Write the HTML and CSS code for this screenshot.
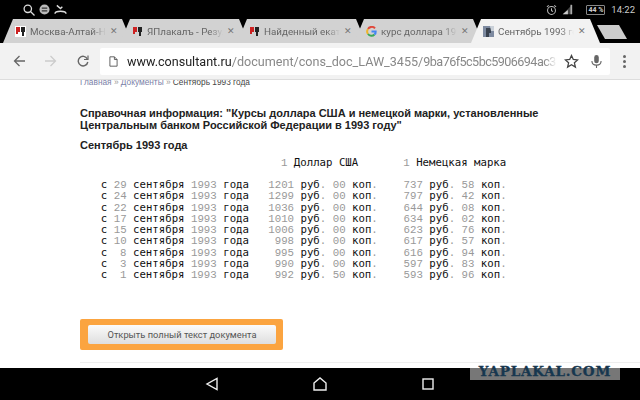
FILE: index.html
```html
<!DOCTYPE html>
<html lang="ru">

<head>
    <meta charset="utf-8">
    <title>Сентябрь 1993 года</title>
    <link rel="stylesheet" href="styles.css">
</head>

<body>
    <div class="statusbar">
        <div class="status_left">
            <svg width="12" height="12" viewBox="0 0 12 12" fill="none" stroke="#ddd" stroke-width="1.3"><circle cx="4.800" cy="4.800" r="3.700"/><path d="M7.500 7.500 11.500 11.500"/></svg>
            <svg width="11" height="11" viewBox="0 0 12 12"><circle cx="6" cy="6" r="5.500" fill="#bbb"/><path d="M3 4.500h6M3 7.500h6" stroke="#333" stroke-width="1.200"/></svg>
            <svg width="13" height="11" viewBox="0 0 14 12" fill="none" stroke="#ddd" stroke-width="1.500"><path d="M1 10.500C1 7 13 7 13 10.500"/><path d="M3 1.500 7 5l2-2"/></svg>
        </div>
        <div class="status_right">
            <svg width="11" height="12" viewBox="0 0 12 12" fill="none" stroke="#bbb" stroke-width="1.100"><circle cx="6" cy="6.500" r="4.300"/><path d="M6 4v2.700l1.700 1M1 2.500 3 1M11 2.500 9 1"/></svg>
            <svg class="signal" width="12" height="13" viewBox="0 0 14 13"><path d="M13 1v11H2z" fill="#444"/><path d="M8 7v5H2z" fill="#ccc"/><path d="M11 1h2v11h-2z" fill="#aaa"/></svg>
            <span class="battery">44 %</span>
            <span class="clock">14:22</span>
        </div>
    </div>

    <div class="tabstrip">
        <div class="tab">
            <svg class="favicon" width="11" height="11" viewBox="0 0 11 11"><rect width="11" height="11" fill="#fff"/><path d="M1 1h4v5H3v2H1z" fill="#c22"/><path d="M6 1h4v5H9v4H7V6H6z" fill="#222"/></svg>
            <span class="tab_title">Москва-Алтай-Новосибирск</span>
            <span class="tab_close">✕</span>
        </div>
        <div class="tab">
            <svg class="favicon" width="11" height="11" viewBox="0 0 11 11"><path d="M1 1h4v5H3v2H1z" fill="#c22"/><path d="M6 1h4v5H9v4H7V6H6z" fill="#222"/></svg>
            <span class="tab_title">ЯПлакалъ - Результаты</span>
            <span class="tab_close">✕</span>
        </div>
        <div class="tab">
            <svg class="favicon" width="11" height="11" viewBox="0 0 11 11"><path d="M1 1h4v5H3v2H1z" fill="#c22"/><path d="M6 1h4v5H9v4H7V6H6z" fill="#222"/></svg>
            <span class="tab_title">Найденный екатеринбург</span>
            <span class="tab_close">✕</span>
        </div>
        <div class="tab">
            <svg class="favicon" width="11" height="11" viewBox="0 0 11 11" fill="none" stroke-width="2"><path d="M9 2.400A4.300 4.300 0 0 0 2 3" stroke="#e0483a"/><path d="M2 3a4.300 4.300 0 0 0 0 5" stroke="#f0b429"/><path d="M2 8a4.300 4.300 0 0 0 6.500.5" stroke="#3aa757"/><path d="M8.500 8.500c1-1 1.300-1.900 1.200-3H5.500" stroke="#4285f4"/></svg>
            <span class="tab_title">курс доллара 1993 года</span>
            <span class="tab_close">✕</span>
        </div>
        <div class="tab tab_active">
            <svg class="favicon" width="11" height="11" viewBox="0 0 11 11"><rect width="11" height="11" fill="#7d8aa0"/><path d="M3 2h5v5H6v4H3z" fill="#39424f"/><path d="M7 0h4v5H8z" fill="#c9d0d8"/></svg>
            <span class="tab_title">Сентябрь 1993 года</span>
            <span class="tab_close">✕</span>
        </div>
        <div class="newtab"></div>
    </div>

    <div class="toolbar">
        <svg class="tool_btn" width="12" height="12" viewBox="0 0 12 12" fill="none" stroke="#666" stroke-width="1.300"><path d="M12 6H1.500M6.500 1 1.500 6l5 5"/></svg>
        <svg class="tool_btn" width="12" height="12" viewBox="0 0 12 12" fill="none" stroke="#ccc" stroke-width="1.300"><path d="M0 6h10.500M5.500 1l5 5-5 5"/></svg>
        <svg class="tool_btn" width="12" height="12" viewBox="0 0 12 12" fill="none" stroke="#666" stroke-width="1.400"><path d="M10.300 3.800A4.800 4.800 0 1 0 10.800 7"/><path d="M11 .5v4H7" stroke-width="1.200"/></svg>
        <div class="omnibox">
            <svg width="9" height="11" viewBox="0 0 10 12" fill="none" stroke="#555"><path d="M1 .8h5l3 3v7.400H1zM6 .8v3h3"/></svg>
            <span class="url"><b>www.consultant.ru</b>/document/cons_doc_LAW_3455/<span class="url_hash">9ba76f5c5bc5906694ac313c</span></span>
            <svg class="star" width="15" height="15" viewBox="0 0 15 15" fill="none" stroke="#444" stroke-width="1.300"><path d="m7.500 1.500 1.800 4 4.300.4-3.200 2.900 1 4.300-3.900-2.300-3.900 2.300 1-4.300L1.400 5.900l4.300-.4z"/></svg>
            <svg class="mic" width="11" height="15" viewBox="0 0 12 16"><rect x="3.500" y="1" width="5" height="9" rx="2.500" fill="#666"/><path d="M1 7.500c0 6 10 6 10 0M6 12v3" fill="none" stroke="#666" stroke-width="1.200"/></svg>
        </div>
        <div class="dots"><i></i><i></i><i></i></div>
    </div>

    <main class="page">
        <div class="crumbs"><a>Главная</a> <span>»</span> <a>Документы</a> <span>»</span> Сентябрь 1993 года</div>

        <h1>Справочная информация: "Курсы доллара США и немецкой марки, установленные<br>Центральным банком Российской Федерации в 1993 году"</h1>
        <h2>Сентябрь 1993 года</h2>

<pre class="rates">                               <i>1</i> Доллар США       <i>1</i> Немецкая марка

   с <i>29</i> сентября <i>1993</i> года   <i>1201</i> руб<i>.</i> <i>00</i> коп<i>.</i>    <i>737</i> руб<i>.</i> <i>58</i> коп<i>.</i>
   с <i>24</i> сентября <i>1993</i> года   <i>1299</i> руб<i>.</i> <i>00</i> коп<i>.</i>    <i>797</i> руб<i>.</i> <i>42</i> коп<i>.</i>
   с <i>22</i> сентября <i>1993</i> года   <i>1036</i> руб<i>.</i> <i>00</i> коп<i>.</i>    <i>644</i> руб<i>.</i> <i>08</i> коп<i>.</i>
   с <i>17</i> сентября <i>1993</i> года   <i>1010</i> руб<i>.</i> <i>00</i> коп<i>.</i>    <i>634</i> руб<i>.</i> <i>02</i> коп<i>.</i>
   с <i>15</i> сентября <i>1993</i> года   <i>1006</i> руб<i>.</i> <i>00</i> коп<i>.</i>    <i>623</i> руб<i>.</i> <i>76</i> коп<i>.</i>
   с <i>10</i> сентября <i>1993</i> года    <i>998</i> руб<i>.</i> <i>00</i> коп<i>.</i>    <i>617</i> руб<i>.</i> <i>57</i> коп<i>.</i>
   с  <i>8</i> сентября <i>1993</i> года    <i>995</i> руб<i>.</i> <i>00</i> коп<i>.</i>    <i>616</i> руб<i>.</i> <i>94</i> коп<i>.</i>
   с  <i>3</i> сентября <i>1993</i> года    <i>990</i> руб<i>.</i> <i>00</i> коп<i>.</i>    <i>597</i> руб<i>.</i> <i>83</i> коп<i>.</i>
   с  <i>1</i> сентября <i>1993</i> года    <i>992</i> руб<i>.</i> <i>50</i> коп<i>.</i>    <i>593</i> руб<i>.</i> <i>96</i> коп<i>.</i></pre>

        <div class="open_box"><button class="open_btn">Открыть полный текст документа</button></div>
        <hr class="page_line">
    </main>

    <div class="navbar">
        <svg width="14" height="14" viewBox="0 0 14 14" fill="none" stroke="#eee" stroke-width="1.400"><path d="M12 1.500v11L2 7z"/></svg>
        <svg width="14" height="14" viewBox="0 0 14 14" fill="none" stroke="#eee" stroke-width="1.400"><path d="M1 6 7 1l6 5v7H1z"/></svg>
        <svg width="14" height="14" viewBox="0 0 14 14" fill="none" stroke="#eee" stroke-width="1.400"><rect x="2" y="2" width="10" height="10"/></svg>
    </div>

    <div class="watermark">YAPLAKAL.COM</div>
</body>

</html>
```
FILE: styles.css
```css
body {
    margin: 0;
    width: 640px;
    height: 400px;
    overflow: hidden;
    position: relative;
    display: flex;
    flex-direction: column;
    background-color: #fff;
    font-family: "Roboto", sans-serif;
}

.statusbar {
    height: 19px;
    background-color: #000;
    display: flex;
    justify-content: space-between;
    align-items: center;
    padding: 0 5px 0 23px;
    color: #ccc;
}

.status_left,
.status_right {
    display: flex;
    align-items: center;
    gap: 4px;
}

.signal {
    margin: 0 9px 0 0;
}

.battery {
    font-size: 7px;
    font-weight: 700;
    color: #ccc;
    border: 1px solid #888;
    border-radius: 1px;
    padding: 0 1px;
    line-height: 8px;
}

.clock {
    font-size: 9.5px;
    margin-left: 2px;
}

.tabstrip {
    height: 24px;
    background-color: #000;
    display: flex;
    padding-left: 3px;
}

.tab {
    flex: none;
    width: 129px;
    height: 24px;
    margin-right: -12px;
    box-sizing: border-box;
    padding: 0 14px 0 12px;
    display: flex;
    align-items: center;
    gap: 4px;
    background-color: #d2d2d2;
    clip-path: polygon(10px 0, 119px 0, 100% 100%, 0 100%);
    position: relative;
}

.tab_active {
    background-color: #f2f2f2;
    z-index: 2;
}

.favicon {
    flex: none;
}

.tab_title {
    flex: 1;
    overflow: hidden;
    white-space: nowrap;
    font-size: 9.8px;
    color: #666;
    -webkit-mask-image: linear-gradient(to right, #000 82%, transparent);
    mask-image: linear-gradient(to right, #000 82%, transparent);
}

.tab_close {
    font-size: 9px;
    color: #777;
}

.newtab {
    flex: none;
    width: 30px;
    height: 14px;
    margin: 6px 0 0 9px;
    background-color: #ccc;
    clip-path: polygon(0 0, 22px 0, 100% 100%, 8px 100%);
}

.toolbar {
    height: 37px;
    box-sizing: border-box;
    padding: 5px 0 5px 13px;
    background-color: #f2f2f2;
    border-bottom: 1px solid #ddd;
    display: flex;
    align-items: center;
    gap: 20px;
    position: relative;
    z-index: 3;
}

.tool_btn {
    flex: none;
}

.omnibox {
    width: 510px;
    height: 27px;
    margin-left: -9px;
    margin-right: -7px;
    box-sizing: border-box;
    padding: 0 8px 0 9px;
    background-color: #fff;
    border-radius: 2px;
    display: flex;
    align-items: center;
    gap: 9px;
    flex: none;
}

.url {
    width: 430px;
    flex: none;
    overflow: hidden;
    white-space: nowrap;
    font-size: 12.6px;
    color: #888;
    -webkit-mask-image: linear-gradient(to right, #000 97%, transparent);
    mask-image: linear-gradient(to right, #000 97%, transparent);
}

.url b {
    font-weight: 400;
    color: #222;
}

.url_hash {
    letter-spacing: -0.55px;
}

.star {
    margin-left: -2px;
}

.mic {
    margin-left: 3px;
}

.dots {
    display: flex;
    flex-direction: column;
    gap: 2px;
}

.dots i {
    display: block;
    width: 3px;
    height: 3px;
    border-radius: 50%;
    background-color: #666;
}

.page {
    flex: 1;
    padding-left: 80px;
    overflow: hidden;
}

.crumbs {
    font-family: "Liberation Sans", sans-serif;
    font-size: 8.3px;
    line-height: 6px;
    margin-top: -1px;
    color: #444;
}

.crumbs a {
    color: #7a7fa8;
}

.crumbs span {
    color: #999;
}

h1,
h2 {
    font-family: "Liberation Sans", sans-serif;
    font-size: 11px;
    line-height: 11.500px;
    font-weight: 700;
    color: #222;
    margin: 0;
}

h1 {
    margin-top: 23px;
}

h2 {
    margin-top: 9px;
}

.rates {
    font-family: "DejaVu Sans Mono", monospace;
    font-size: 10.7px;
    line-height: 11.25px;
    color: #111;
    margin: 5px 0 0;
    padding-left: 1.5px;
}

.rates i {
    font-family: "Liberation Mono", monospace;
    font-size: 10.75px;
    line-height: 0;
    font-style: normal;
    color: #999;
}

.open_box {
    width: 203px;
    height: 31px;
    margin-top: 39px;
    box-sizing: border-box;
    padding: 6px 7px 6px 8px;
    background-color: #fba440;
    border-radius: 2px;
}

.open_btn {
    display: block;
    width: 100%;
    height: 19px;
    padding: 0;
    border: 0;
    border-radius: 2px;
    background: linear-gradient(#fbfbfb, #dedede);
    font-family: "Roboto", sans-serif;
    font-size: 9.3px;
    color: #555;
}

.page_line {
    border: 0;
    border-top: 1px solid #eee;
    margin: 12px 0 0;
}

.navbar {
    height: 32px;
    background-color: #000;
    display: flex;
    justify-content: center;
    align-items: center;
    gap: 94px;
}

/* метка сайта поверх скриншота */
.watermark {
    position: absolute;
    left: 470px;
    top: 368px;
    width: 150px;
    height: 12px;
    background-color: #777;
    color: #17374f;
    font-family: "DejaVu Serif", serif;
    font-size: 13.500px;
    line-height: 7px;
    letter-spacing: 0.8px;
    -webkit-text-stroke: 0.3px #17374f;
    font-weight: 700;
    text-align: center;
    white-space: nowrap;
}
```
